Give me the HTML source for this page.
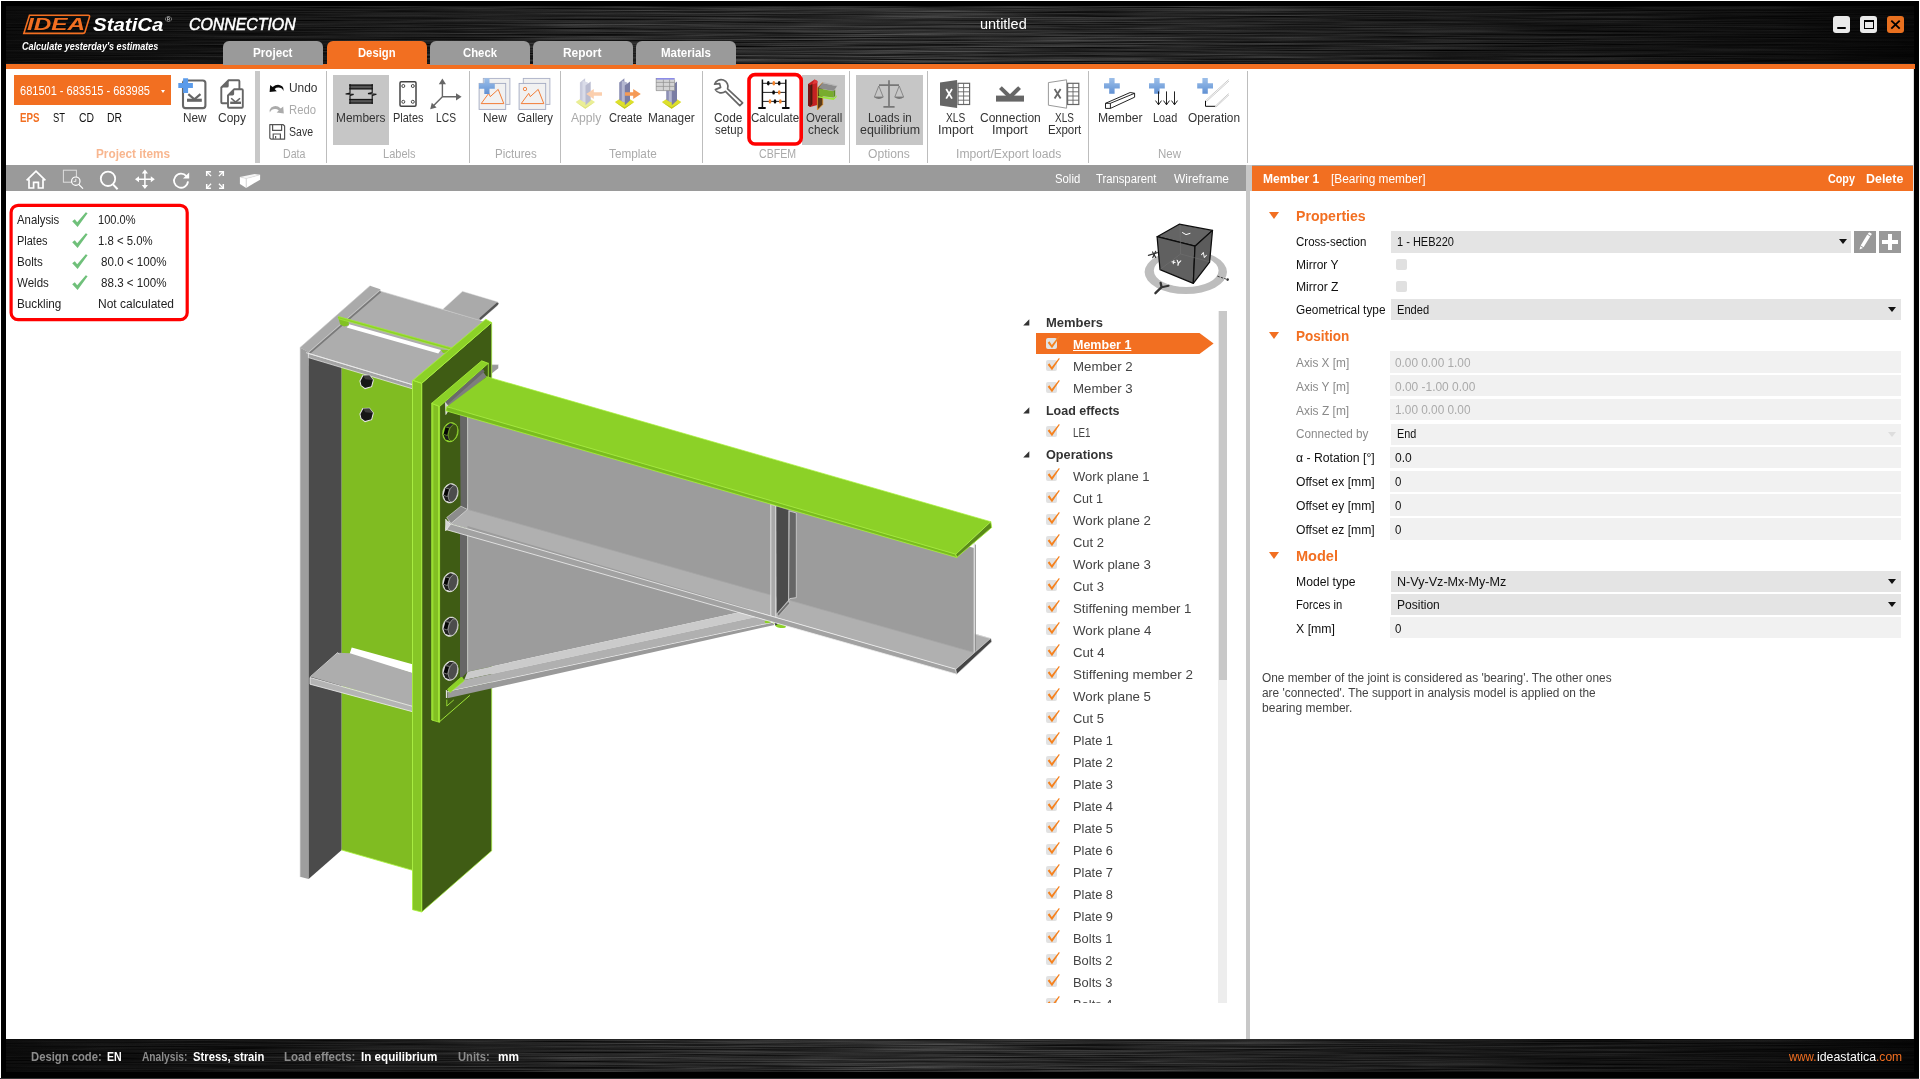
<!DOCTYPE html>
<html lang="en"><head><meta charset="utf-8"><title>IDEA StatiCa Connection - untitled</title>
<style>
*{box-sizing:border-box;margin:0;padding:0}
html,body{width:1920px;height:1079px;overflow:hidden;background:#fff;font-family:"Liberation Sans",sans-serif;}
body{position:relative}
.a{position:absolute}
.t{position:absolute;white-space:pre;line-height:1;transform-origin:0 50%;display:block}
.sep{position:absolute;top:71px;height:92px;width:1px;background:#bdbdbd}
.tab{position:absolute;top:41px;height:24px;width:100px;border-radius:6px 6px 0 0;background:#9a9a9a;color:#fff;font-weight:bold;font-size:13px;text-align:center;line-height:24px}
.hl{position:absolute;background:#c6c6c6}
.fld{position:absolute;left:1390px;width:511px;height:21.4px;background:#f1f1f1}
.cmb{position:absolute;left:1391px;width:510px;height:21px;background:#e4e4e4}
.arr{position:absolute;width:0;height:0;border-left:4px solid transparent;border-right:4px solid transparent;border-top:5px solid #111}
.tri{position:absolute;left:1269px;width:0;height:0;border-left:5px solid transparent;border-right:5px solid transparent;border-top:7px solid #F26F21}
.cb{position:absolute;width:11px;height:11px;border-radius:2px;background:#e2e2e2}
svg{position:absolute;overflow:visible}
</style></head>
<body>
<div class="a" style="left:1px;top:1px;width:1918px;height:1077px;background:#000"></div>
<div class="a" style="left:0;top:1078px;width:1919px;height:1px;background:#333"></div>
<div class="a" style="left:6px;top:64px;width:1908px;height:975px;background:#fff"></div>
<svg class="a" style="left:6px;top:6px" width="1908" height="58"><defs>
<filter id="br" x="0" y="0" width="100%" height="100%" color-interpolation-filters="sRGB"><feTurbulence type="fractalNoise" baseFrequency="0.006 0.7" numOctaves="3" seed="7"/>
<feColorMatrix type="matrix" values="1.3 0 0 0 -0.15  1.3 0 0 0 -0.15  1.3 0 0 0 -0.15  0 0 0 0 1"/></filter>
<linearGradient id="bg1" x1="0" x2="1" y1="0" y2="0"><stop offset="0" stop-color="#0b0b0b"/><stop offset="0.12" stop-color="#141414"/><stop offset="0.42" stop-color="#2b2b2b"/><stop offset="0.56" stop-color="#292929"/><stop offset="0.76" stop-color="#1a1a1a"/><stop offset="0.93" stop-color="#0e0e0e"/><stop offset="1" stop-color="#060606"/></linearGradient>
</defs><rect width="1908" height="58" fill="url(#bg1)"/><rect width="1908" height="58" fill="#808080" filter="url(#br)" style="mix-blend-mode:overlay"/><rect y="57" width="1908" height="1" fill="#10161c"/></svg>
<svg class="a" style="left:6px;top:1039px" width="1908" height="33"><rect width="1908" height="33" fill="url(#bg1)"/><rect width="1908" height="33" fill="#808080" filter="url(#br)" style="mix-blend-mode:overlay"/></svg>
<div class="a" style="left:6px;top:64px;width:1909px;height:5px;background:#F26F21"></div>
<div class="tab" style="left:223px;background:#9a9a9a"></div>
<div class="tab" style="left:327px;background:#F26F21"></div>
<div class="tab" style="left:430px;background:#9a9a9a"></div>
<div class="tab" style="left:533px;background:#9a9a9a"></div>
<div class="tab" style="left:636px;background:#9a9a9a"></div>
<div class="a" style="left:1833px;top:16px;width:17px;height:17px;border-radius:3px;background:#eaeaea"></div>
<div class="a" style="left:1837px;top:27px;width:9px;height:2px;background:#000;border-radius:1px"></div>
<div class="a" style="left:1860px;top:16px;width:17px;height:17px;border-radius:3px;background:#eaeaea"></div>
<div class="a" style="left:1864px;top:20px;width:9.5px;height:9px;border:1.6px solid #000;border-top-width:2.2px"></div>
<div class="a" style="left:1887px;top:16px;width:17px;height:17px;border-radius:3px;background:#e8701f"></div>
<svg style="left:1887px;top:16px" width="17" height="17"><path d="M4.3 4.6 L12.7 12.6 M12.7 4.6 L4.3 12.6" stroke="#000" stroke-width="1.9" fill="none"/></svg>
<svg style="left:0;top:0" width="200" height="60"><path d="M29.5 15.2 H88.2 Q90 15.2 89.5 17 L85 32 Q84.6 33.4 83 33.4 H23.8 Z" fill="none" stroke="#F26F21" stroke-width="1.6"/></svg>
<div class="a" style="left:14px;top:75px;width:157px;height:30px;background:#F26F21"></div>
<div class="a" style="left:160.5px;top:89.5px;width:0;height:0;border-left:2.5px solid transparent;border-right:2.5px solid transparent;border-top:3px solid #fff"></div>
<div class="a" style="left:255px;top:71px;width:5px;height:92px;background:#c8c8c8"></div>
<div class="sep" style="left:326px"></div>
<div class="sep" style="left:469px"></div>
<div class="sep" style="left:560px"></div>
<div class="sep" style="left:702px"></div>
<div class="sep" style="left:849px"></div>
<div class="sep" style="left:927px"></div>
<div class="sep" style="left:1088px"></div>
<div class="sep" style="left:1247px"></div>
<div class="hl" style="left:333px;top:75px;width:56px;height:70px"></div>
<div class="hl" style="left:802px;top:75px;width:43px;height:70px"></div>
<div class="hl" style="left:856px;top:75px;width:67px;height:70px"></div>
<div class="a" style="left:6px;top:165px;width:1240px;height:26px;background:#9a9a9a"></div>
<div class="a" style="left:1246px;top:165px;width:6px;height:874px;background:#c8c8c8"></div>
<div class="a" style="left:1250px;top:191px;width:2px;height:848px;background:#fff"></div>
<div class="a" style="left:1252px;top:165px;width:662px;height:1px;background:#aaa"></div>
<div class="a" style="left:1252px;top:166px;width:661px;height:25px;background:#F26F21"></div>
<div class="a" style="left:1913px;top:69px;width:1px;height:970px;background:#ddd"></div>
<svg style="left:0;top:0" width="1920" height="1079" viewBox="0 0 1920 1079">
<defs><linearGradient id="pl" x1="0" y1="0" x2="0" y2="1"><stop offset="0" stop-color="#9dbfe9"/><stop offset="0.5" stop-color="#7fa9df"/><stop offset="1" stop-color="#5f8fd2"/></linearGradient><linearGradient id="pl2" x1="0" y1="0" x2="0" y2="1"><stop offset="0" stop-color="#5b9bea"/><stop offset="1" stop-color="#5b9bea"/></linearGradient></defs>
<rect x="183" y="80.5" width="22.4" height="27.6" rx="2.6" fill="#fff" stroke="#666" stroke-width="2.1"/>
<rect x="187.00" y="98.70" width="14.80" height="3.10" fill="#666"/><path d="M188.33 94.11 L194.40 99.30 L200.47 94.11" stroke="#666" stroke-width="2.20" fill="none" stroke-linejoin="miter"/>
<rect x="178" y="78" width="15.2" height="15.2" fill="#fff" opacity="0"/>
<path d="M183.10 78.30 h5.00 v4.80 h4.80 v5.00 h-4.80 v4.80 h-5.00 v-4.80 h-4.80 v-5.00 h4.80 Z" fill="url(#pl2)"/>
<path d="M221.3 87.5 L228.6 80.3 H238.4 Q239.4 80.3 239.4 81.3 V102.2 Q239.4 103.2 238.4 103.2 H222.3 Q221.3 103.2 221.3 102.2 Z" fill="#fff" stroke="#666" stroke-width="1.9" stroke-linejoin="round"/>
<path d="M221.6 87.6 L228.7 80.5 L228.7 86 Q228.7 87.6 227 87.6 Z" fill="#666"/>
<path d="M228 95.3 L234 89.3 H241.8 Q242.8 89.3 242.8 90.3 V106.8 Q242.8 107.8 241.8 107.8 H229 Q228 107.8 228 106.8 Z" fill="#fff" stroke="#666" stroke-width="1.9" stroke-linejoin="round"/>
<path d="M228.3 95.4 L234.1 89.5 L234.1 94 Q234.1 95.4 232.6 95.4 Z" fill="#666"/>
<rect x="230.20" y="101.60" width="10.80" height="2.40" fill="#666"/><path d="M231.17 98.25 L235.60 102.20 L240.03 98.25" stroke="#666" stroke-width="1.60" fill="none" stroke-linejoin="miter"/>
<path d="M269.6 92 L270.2 85 L272.6 87 Q277.6 82.8 282.2 86.2 Q284.2 88 283.6 91 Q282 87.6 278.4 87.6 Q276.2 87.6 274.6 89 L276.8 91.2 Z" fill="#0a0a0a"/>
<path d="M283.8 113.6 L283.2 106.4 L280.8 108.4 Q275.8 104.2 271.2 107.6 Q269.2 109.4 269.8 112.4 Q271.4 109 275 109 Q277.2 109 278.8 110.4 L276.6 112.6 Z" fill="#ababab"/>
<path d="M269.8 124.7 H283.2 L284.6 126 V139.2 H271 L269.8 138 Z" fill="#fff" stroke="#555" stroke-width="1.2" stroke-linejoin="round"/>
<path d="M272.6 124.8 V130.4 H281.6 V124.8 M273.2 139 V134 H280.4 V139 M275.6 136 V138.6" fill="none" stroke="#555" stroke-width="1.2"/>
<rect x="349.6" y="84.3" width="23" height="5.2" fill="#555"/>
<rect x="349.6" y="98.8" width="23" height="5" fill="#555"/>
<path d="M349.2 85.2 H372.8 M349.2 88.8 H372.8 M349.2 99.6 H372.8 M349.2 103 H372.8" stroke="#111" stroke-width="1" fill="none"/>
<path d="M350 84 V93 L345.6 94 L353.6 94.4 L350 95.6 V104 M372.2 84 V92.6 L368 93.6 L376.4 94.2 L372.2 95.4 V104" stroke="#111" stroke-width="1.1" fill="none"/>
<rect x="400" y="81.8" width="16" height="24.4" rx="1.2" fill="#fff" stroke="#444" stroke-width="1.5"/>
<circle cx="403.3" cy="86.0" r="1.5" fill="#fff" stroke="#333" stroke-width="0.9"/>
<circle cx="412.8" cy="86.0" r="1.5" fill="#fff" stroke="#333" stroke-width="0.9"/>
<circle cx="403.3" cy="101.8" r="1.5" fill="#fff" stroke="#333" stroke-width="0.9"/>
<circle cx="412.8" cy="101.8" r="1.5" fill="#fff" stroke="#333" stroke-width="0.9"/>
<path d="M442.4 96.8 V82 M442.4 96.8 H457 M442.4 96.8 L433.2 106" stroke="#666" stroke-width="1.4" fill="none"/>
<polygon points="442.4,78.6 446,84.2 438.8,84.2" fill="#666"/>
<polygon points="461.6,96.8 456,93.2 456,100.4" fill="#666"/>
<polygon points="430.2,109.2 431.8,102.8 436.6,107.6" fill="#666"/>
<rect x="483.3" y="78.4" width="26.6" height="26" fill="#f1f1f1" stroke="#aab0c6" stroke-width="0.9"/>
<rect x="479.1" y="83.4" width="26.6" height="26" fill="#f1f1f1" stroke="#a3aac2" stroke-width="0.9"/>
<path d="M481.2 103.6 L488.7 93.4 L490.3 96.6 L498.2 89.4 L503.8 103.6 Z" fill="none" stroke="#F26F21" stroke-width="0.9" stroke-linejoin="round"/>
<rect x="523.3" y="78.4" width="26.6" height="26" fill="#f1f1f1" stroke="#aab0c6" stroke-width="0.9"/>
<rect x="519.1" y="83.4" width="26.6" height="26" fill="#f1f1f1" stroke="#a3aac2" stroke-width="0.9"/>
<path d="M521.2 103.6 L528.7 93.4 L530.3 96.6 L538.2 89.4 L543.8 103.6 Z" fill="none" stroke="#F26F21" stroke-width="0.9" stroke-linejoin="round"/>
<circle cx="525" cy="89" r="1.7" fill="none" stroke="#F26F21" stroke-width="0.8"/>
<path d="M484.30 78.20 h5.20 v5.30 h5.30 v5.20 h-5.30 v5.30 h-5.20 v-5.30 h-5.30 v-5.20 h5.30 Z" fill="url(#pl)"/>
<polygon points="575.6,102.0 585.3,95.8 595.0,102.0 585.3,108.7" fill="#eaee96"/><polygon points="575.6,102.0 585.3,108.7 595.0,102.0 585.3,107.2" fill="#e0e480"/><polygon points="579.9,82.5 585.1,78.2 585.1,102.5 579.9,99.8" fill="#c9cbdc"/><polygon points="582.5,80.4 587.9,82.6 587.9,103.2 582.5,101.2" fill="#d9dbe8"/><polygon points="585.5,85.6 590.7,81.4 590.7,100.6 585.5,105.2" fill="#b9bbd0"/>
<polygon points="602.0,92.2 593.8,92.2 593.8,89.0 586.2,94.0 593.8,99.0 593.8,95.8 602.0,95.8" fill="#fbcfae"/>
<polygon points="614.9,102.0 624.6,95.8 634.3,102.0 624.6,108.7" fill="#dde02c"/><polygon points="614.9,102.0 624.6,108.7 634.3,102.0 624.6,107.2" fill="#c2c71c"/><polygon points="619.2,82.5 624.4,78.2 624.4,102.5 619.2,99.8" fill="#8d90b4"/><polygon points="621.8,80.4 627.2,82.6 627.2,103.2 621.8,101.2" fill="#b4b7d0"/><polygon points="624.8,85.6 630.0,81.4 630.0,100.6 624.8,105.2" fill="#7a7da4"/>
<polygon points="625.0,92.2 633.2,92.2 633.2,89.0 640.8,94.0 633.2,99.0 633.2,95.8 625.0,95.8" fill="#f59a56"/>
<polygon points="661.9,102.0 671.6,95.8 681.3,102.0 671.6,108.7" fill="#dde02c"/><polygon points="661.9,102.0 671.6,108.7 681.3,102.0 671.6,107.2" fill="#c2c71c"/><polygon points="666.2,82.5 671.4,78.2 671.4,102.5 666.2,99.8" fill="#8d90b4"/><polygon points="668.8,80.4 674.2,82.6 674.2,103.2 668.8,101.2" fill="#b4b7d0"/><polygon points="671.8,85.6 677.0,81.4 677.0,100.6 671.8,105.2" fill="#7a7da4"/>
<rect x="656" y="78" width="18.6" height="12.6" fill="#d4d4d4"/>
<rect x="656" y="78" width="18.6" height="1.6" fill="#8c8ce8"/>
<path d="M656 82.4 H674.6 M656 86.4 H674.6 M656 90.6 H674.6 M656.2 78 V90.6 M663.4 79.6 V90.6 M669.6 79.6 V90.6 M674.6 79.6 V90.6" stroke="#8f8f8f" stroke-width="0.7" fill="none"/>
<path d="M714.6 84.2 L719.6 83.6 L720.6 87.4 L715.4 89.6 A6.6 6.6 0 0 0 725.4 91.4 L739.8 105.6 L742.6 102.8 L727.6 88.8 A6.6 6.6 0 0 0 714.6 84.2 Z" fill="#fff" stroke="#666" stroke-width="1.7" stroke-linejoin="round"/>
<path d="M762.4 79.4 V108.2 M785.8 79.4 V108.2" stroke="#0a0a0a" stroke-width="1.5" fill="none"/>
<path d="M759 108 H765 M782.8 108 H788.8" stroke="#0a0a0a" stroke-width="1.9" stroke-linecap="round" fill="none"/>
<path d="M762.4 83.3 H785.8 M762.4 92.4 H785.8 M762.4 101.4 H785.8" stroke="#0a0a0a" stroke-width="0.9" fill="none"/>
<ellipse cx="768.3" cy="83.3" rx="1.35" ry="2.2" fill="#0a0a0a"/>
<ellipse cx="773.8" cy="83.3" rx="1.35" ry="2.2" fill="#f5822a"/>
<ellipse cx="779.2" cy="83.3" rx="1.35" ry="2.2" fill="#0a0a0a"/>
<ellipse cx="773.6" cy="92.4" rx="1.35" ry="2.2" fill="#0a0a0a"/>
<ellipse cx="779.2" cy="92.4" rx="1.35" ry="2.2" fill="#f5822a"/>
<ellipse cx="770.0" cy="101.4" rx="1.35" ry="2.2" fill="#f5822a"/>
<ellipse cx="775.0" cy="101.4" rx="1.35" ry="2.2" fill="#0a0a0a"/>
<ellipse cx="780.3" cy="101.4" rx="1.35" ry="2.2" fill="#f5822a"/>
<polygon points="808,84 814.6,79.4 817.4,81 817.4,105 810,107 808,105.4" fill="#c32222"/>
<polygon points="808,84 810.2,85.2 810.2,106.8 808,105.4" fill="#7c1414"/>
<polygon points="810.2,85.2 812.4,84 812.4,104 810.2,106.8" fill="#4a1a10"/>
<polygon points="814.6,79.4 817.4,81 817.4,83 812.4,84.2" fill="#e23a3a"/>
<polygon points="817.4,88 822.8,82.4 822.8,104.6 817.4,110" fill="#5a3a1a" stroke="#f0961e" stroke-width="0.7"/>
<polygon points="818.4,88.2 822.2,83 837,86.2 833.6,91" fill="#8c8c8c"/>
<polygon points="822.2,83 823,82 837.6,85.4 837,86.2" fill="#b4b4b4"/>
<polygon points="818.6,88.4 833.6,91.2 833.6,97.6 819,95.8" fill="#78ac2e"/>
<polygon points="818.2,96 834,98 836.6,95.2 836.6,97 833.6,100 818.2,97.4" fill="#9be83a"/>
<polygon points="833.6,91.2 835.2,89.4 835.2,96 833.6,97.6" fill="#5d8a22"/>
<path d="M889 80.2 V106.6 M879 85.2 H899 M883.4 106.8 H894.6" stroke="#777" stroke-width="1.7" fill="none"/>
<path d="M878.8 86 L874.4 97 H883.2 Z" fill="none" stroke="#777" stroke-width="0.8" stroke-linejoin="round"/>
<path d="M874.0 97 Q878.8 100.8 883.6 97 Z" fill="#777"/>
<path d="M899.2 86 L894.8 97 H903.6 Z" fill="none" stroke="#777" stroke-width="0.8" stroke-linejoin="round"/>
<path d="M894.4 97 Q899.2 100.8 904.0 97 Z" fill="#777"/>
<rect x="958" y="83.3" width="11.6" height="21.2" fill="#fff" stroke="#666" stroke-width="1.2"/>
<path d="M958 87.6 H969.6 M958 91.8 H969.6 M958 96 H969.6 M958 100.2 H969.6 M963.6 83.3 V104.5" stroke="#666" stroke-width="0.9" fill="none"/>
<polygon points="940,82.4 957.1,79.9 957.1,108 940,105.5" fill="#666"/>
<path d="M946.2 89 L952 98.6 M952 89 L946.2 98.6" stroke="#fff" stroke-width="1.8" fill="none"/>
<rect x="996" y="95.6" width="28" height="6" fill="#666"/>
<path d="M1000.4 87.6 L1010 97 L1019.6 87.6" stroke="#666" stroke-width="4" fill="none"/>
<rect x="1067.6" y="83.3" width="11.2" height="21.2" fill="#fff" stroke="#666" stroke-width="1.2"/>
<path d="M1067.6 87.6 H1078.8 M1067.6 91.8 H1078.8 M1067.6 96 H1078.8 M1067.6 100.2 H1078.8 M1073 83.3 V104.5" stroke="#666" stroke-width="0.9" fill="none"/>
<polygon points="1048.4,82.6 1066.6,79.8 1066.6,108.2 1048.4,105.2" fill="#fff" stroke="#9a9a9a" stroke-width="1"/>
<path d="M1054.6 89 L1060.6 98.6 M1060.6 89 L1054.6 98.6" stroke="#666" stroke-width="1.8" fill="none"/>
<path d="M1109.20 78.00 h5.40 v5.20 h5.20 v5.40 h-5.20 v5.20 h-5.40 v-5.20 h-5.20 v-5.40 h5.20 Z" fill="url(#pl)"/>
<path d="M1105.5 103.3 H1110.4 V108.4 H1105.5 Z M1105.5 103.3 L1130.2 92.5 L1134.6 93.3 L1110.4 103.3 M1134.6 93.3 V97.2 L1110.4 108.4" fill="#fff" stroke="#0a0a0a" stroke-width="0.9" stroke-linejoin="round"/>
<path d="M1154.20 78.00 h5.40 v5.20 h5.20 v5.40 h-5.20 v5.20 h-5.40 v-5.20 h-5.20 v-5.40 h5.20 Z" fill="url(#pl)"/>
<path d="M1158.5 91.4 V104.6 M1155.5 100.6 L1158.5 104.8 L1161.5 100.6" stroke="#0a0a0a" stroke-width="0.9" fill="none"/>
<path d="M1166.5 91.4 V104.6 M1163.5 100.6 L1166.5 104.8 L1169.5 100.6" stroke="#0a0a0a" stroke-width="0.9" fill="none"/>
<path d="M1174.5 91.4 V104.6 M1171.5 100.6 L1174.5 104.8 L1177.5 100.6" stroke="#0a0a0a" stroke-width="0.9" fill="none"/>
<path d="M1202.40 78.00 h5.40 v5.20 h5.20 v5.40 h-5.20 v5.20 h-5.40 v-5.20 h-5.20 v-5.40 h5.20 Z" fill="url(#pl)"/>
<path d="M1205.6 100.6 L1228.6 79.6 M1206.4 101.6 L1229 81 M1215 106.4 L1228.6 93.6 M1215.8 107.2 L1229 94.8" stroke="#b8b8b8" stroke-width="0.7" fill="none"/>
<path d="M1205.5 100.8 V106.3 H1215.2" stroke="#0a0a0a" stroke-width="1" fill="none"/>
<path d="M26.6 180.4 L36 171.2 L45.4 180.4 M29 179.2 V188 H33.6 V182.4 H38.4 V188 H43 V179.2" fill="none" stroke="#fff" stroke-width="1.7" stroke-linejoin="miter"/>
<rect x="63.4" y="170.2" width="13" height="12" fill="none" stroke="#dedede" stroke-width="1"/>
<circle cx="75.8" cy="181.2" r="4.2" fill="#9a9a9a" stroke="#fff" stroke-width="1.2"/>
<path d="M78.8 184.4 L83 188.6" stroke="#fff" stroke-width="1.3"/>
<path d="M75.8 178.8 V181.4 H73.6" stroke="#fff" stroke-width="0.8" fill="none"/>
<circle cx="108" cy="178.8" r="7.2" fill="none" stroke="#fff" stroke-width="1.8"/>
<path d="M113 184.4 L117.6 189.2" stroke="#fff" stroke-width="2"/>
<path d="M144.9 171.6 V186.8 M137.2 179.2 H152.6" stroke="#fff" stroke-width="1.5"/>
<path d="M144.9 169.4 L148 173.4 H141.8 Z M144.9 189 L148 185 H141.8 Z M135 179.2 L139 176.2 V182.2 Z M154.8 179.2 L150.8 176.2 V182.2 Z" fill="#fff"/>
<path d="M186.4 176.2 A7 7 0 1 0 188 181.4" fill="none" stroke="#fff" stroke-width="1.8"/>
<path d="M189.2 172.4 V178.6 H183 Z" fill="#fff"/>
<path d="M206.7 171.7 L211.1 176.1" stroke="#fff" stroke-width="1.3" fill="none"/>
<path d="M205.9 171.7 H210.9 M206.7 170.9 V175.9" stroke="#fff" stroke-width="1.5" fill="none"/>
<path d="M223.3 171.7 L218.9 176.1" stroke="#fff" stroke-width="1.3" fill="none"/>
<path d="M224.1 171.7 H219.1 M223.3 170.9 V175.9" stroke="#fff" stroke-width="1.5" fill="none"/>
<path d="M206.7 188.1 L211.1 183.7" stroke="#fff" stroke-width="1.3" fill="none"/>
<path d="M205.9 188.2 H210.9 M206.7 188.9 V183.9" stroke="#fff" stroke-width="1.5" fill="none"/>
<path d="M223.3 188.1 L218.9 183.7" stroke="#fff" stroke-width="1.3" fill="none"/>
<path d="M224.1 188.2 H219.1 M223.3 188.9 V183.9" stroke="#fff" stroke-width="1.5" fill="none"/>
<polygon points="239.9,177.1 246.2,178.6 246.2,187.9 239.9,184" fill="#fff"/>
<polygon points="239.9,177.1 254.5,173.9 260.1,174.8 246.2,178.6" fill="#f4f4f4"/>
<polygon points="246.2,178.6 260.1,174.8 260.1,179.7 246.2,187.9" fill="#fff"/>
<path d="M246.2 178.8 V187.6" stroke="#c4c4c4" stroke-width="0.6"/>
<path d="M240.4 177.2 L246.2 178.6 L259.6 175" stroke="#dadada" stroke-width="0.5" fill="none"/>
</svg>
<svg style="left:0;top:0" width="1920" height="1079"><path d="M1036 333 H1199.5 L1213.6 343.5 L1199.5 354 H1036 Z" fill="#F26F21"/></svg>
<svg style="left:1023px;top:319.0px" width="8" height="8"><path d="M6.3 0.3 V6.5 H0.2 Z" fill="#333"/></svg>
<div class="cb" style="left:1046px;top:338.0px"></div>
<svg style="left:1046px;top:335.0px" width="14" height="14"><path d="M1.7 7.7 L3.4 6.2 L5.8 10 L12.9 1 L13.8 1.7 L6 13.3 Z" fill="#f5821f"/></svg>
<div class="cb" style="left:1046px;top:360.0px"></div>
<svg style="left:1046px;top:357.0px" width="14" height="14"><path d="M1.7 7.7 L3.4 6.2 L5.8 10 L12.9 1 L13.8 1.7 L6 13.3 Z" fill="#f5821f"/></svg>
<div class="cb" style="left:1046px;top:382.0px"></div>
<svg style="left:1046px;top:379.0px" width="14" height="14"><path d="M1.7 7.7 L3.4 6.2 L5.8 10 L12.9 1 L13.8 1.7 L6 13.3 Z" fill="#f5821f"/></svg>
<svg style="left:1023px;top:407.0px" width="8" height="8"><path d="M6.3 0.3 V6.5 H0.2 Z" fill="#333"/></svg>
<div class="cb" style="left:1046px;top:426.0px"></div>
<svg style="left:1046px;top:423.0px" width="14" height="14"><path d="M1.7 7.7 L3.4 6.2 L5.8 10 L12.9 1 L13.8 1.7 L6 13.3 Z" fill="#f5821f"/></svg>
<svg style="left:1023px;top:451.0px" width="8" height="8"><path d="M6.3 0.3 V6.5 H0.2 Z" fill="#333"/></svg>
<div class="cb" style="left:1046px;top:470.0px"></div>
<svg style="left:1046px;top:467.0px" width="14" height="14"><path d="M1.7 7.7 L3.4 6.2 L5.8 10 L12.9 1 L13.8 1.7 L6 13.3 Z" fill="#f5821f"/></svg>
<div class="cb" style="left:1046px;top:492.0px"></div>
<svg style="left:1046px;top:489.0px" width="14" height="14"><path d="M1.7 7.7 L3.4 6.2 L5.8 10 L12.9 1 L13.8 1.7 L6 13.3 Z" fill="#f5821f"/></svg>
<div class="cb" style="left:1046px;top:514.0px"></div>
<svg style="left:1046px;top:511.0px" width="14" height="14"><path d="M1.7 7.7 L3.4 6.2 L5.8 10 L12.9 1 L13.8 1.7 L6 13.3 Z" fill="#f5821f"/></svg>
<div class="cb" style="left:1046px;top:536.0px"></div>
<svg style="left:1046px;top:533.0px" width="14" height="14"><path d="M1.7 7.7 L3.4 6.2 L5.8 10 L12.9 1 L13.8 1.7 L6 13.3 Z" fill="#f5821f"/></svg>
<div class="cb" style="left:1046px;top:558.0px"></div>
<svg style="left:1046px;top:555.0px" width="14" height="14"><path d="M1.7 7.7 L3.4 6.2 L5.8 10 L12.9 1 L13.8 1.7 L6 13.3 Z" fill="#f5821f"/></svg>
<div class="cb" style="left:1046px;top:580.0px"></div>
<svg style="left:1046px;top:577.0px" width="14" height="14"><path d="M1.7 7.7 L3.4 6.2 L5.8 10 L12.9 1 L13.8 1.7 L6 13.3 Z" fill="#f5821f"/></svg>
<div class="cb" style="left:1046px;top:602.0px"></div>
<svg style="left:1046px;top:599.0px" width="14" height="14"><path d="M1.7 7.7 L3.4 6.2 L5.8 10 L12.9 1 L13.8 1.7 L6 13.3 Z" fill="#f5821f"/></svg>
<div class="cb" style="left:1046px;top:624.0px"></div>
<svg style="left:1046px;top:621.0px" width="14" height="14"><path d="M1.7 7.7 L3.4 6.2 L5.8 10 L12.9 1 L13.8 1.7 L6 13.3 Z" fill="#f5821f"/></svg>
<div class="cb" style="left:1046px;top:646.0px"></div>
<svg style="left:1046px;top:643.0px" width="14" height="14"><path d="M1.7 7.7 L3.4 6.2 L5.8 10 L12.9 1 L13.8 1.7 L6 13.3 Z" fill="#f5821f"/></svg>
<div class="cb" style="left:1046px;top:668.0px"></div>
<svg style="left:1046px;top:665.0px" width="14" height="14"><path d="M1.7 7.7 L3.4 6.2 L5.8 10 L12.9 1 L13.8 1.7 L6 13.3 Z" fill="#f5821f"/></svg>
<div class="cb" style="left:1046px;top:690.0px"></div>
<svg style="left:1046px;top:687.0px" width="14" height="14"><path d="M1.7 7.7 L3.4 6.2 L5.8 10 L12.9 1 L13.8 1.7 L6 13.3 Z" fill="#f5821f"/></svg>
<div class="cb" style="left:1046px;top:712.0px"></div>
<svg style="left:1046px;top:709.0px" width="14" height="14"><path d="M1.7 7.7 L3.4 6.2 L5.8 10 L12.9 1 L13.8 1.7 L6 13.3 Z" fill="#f5821f"/></svg>
<div class="cb" style="left:1046px;top:734.0px"></div>
<svg style="left:1046px;top:731.0px" width="14" height="14"><path d="M1.7 7.7 L3.4 6.2 L5.8 10 L12.9 1 L13.8 1.7 L6 13.3 Z" fill="#f5821f"/></svg>
<div class="cb" style="left:1046px;top:756.0px"></div>
<svg style="left:1046px;top:753.0px" width="14" height="14"><path d="M1.7 7.7 L3.4 6.2 L5.8 10 L12.9 1 L13.8 1.7 L6 13.3 Z" fill="#f5821f"/></svg>
<div class="cb" style="left:1046px;top:778.0px"></div>
<svg style="left:1046px;top:775.0px" width="14" height="14"><path d="M1.7 7.7 L3.4 6.2 L5.8 10 L12.9 1 L13.8 1.7 L6 13.3 Z" fill="#f5821f"/></svg>
<div class="cb" style="left:1046px;top:800.0px"></div>
<svg style="left:1046px;top:797.0px" width="14" height="14"><path d="M1.7 7.7 L3.4 6.2 L5.8 10 L12.9 1 L13.8 1.7 L6 13.3 Z" fill="#f5821f"/></svg>
<div class="cb" style="left:1046px;top:822.0px"></div>
<svg style="left:1046px;top:819.0px" width="14" height="14"><path d="M1.7 7.7 L3.4 6.2 L5.8 10 L12.9 1 L13.8 1.7 L6 13.3 Z" fill="#f5821f"/></svg>
<div class="cb" style="left:1046px;top:844.0px"></div>
<svg style="left:1046px;top:841.0px" width="14" height="14"><path d="M1.7 7.7 L3.4 6.2 L5.8 10 L12.9 1 L13.8 1.7 L6 13.3 Z" fill="#f5821f"/></svg>
<div class="cb" style="left:1046px;top:866.0px"></div>
<svg style="left:1046px;top:863.0px" width="14" height="14"><path d="M1.7 7.7 L3.4 6.2 L5.8 10 L12.9 1 L13.8 1.7 L6 13.3 Z" fill="#f5821f"/></svg>
<div class="cb" style="left:1046px;top:888.0px"></div>
<svg style="left:1046px;top:885.0px" width="14" height="14"><path d="M1.7 7.7 L3.4 6.2 L5.8 10 L12.9 1 L13.8 1.7 L6 13.3 Z" fill="#f5821f"/></svg>
<div class="cb" style="left:1046px;top:910.0px"></div>
<svg style="left:1046px;top:907.0px" width="14" height="14"><path d="M1.7 7.7 L3.4 6.2 L5.8 10 L12.9 1 L13.8 1.7 L6 13.3 Z" fill="#f5821f"/></svg>
<div class="cb" style="left:1046px;top:932.0px"></div>
<svg style="left:1046px;top:929.0px" width="14" height="14"><path d="M1.7 7.7 L3.4 6.2 L5.8 10 L12.9 1 L13.8 1.7 L6 13.3 Z" fill="#f5821f"/></svg>
<div class="cb" style="left:1046px;top:954.0px"></div>
<svg style="left:1046px;top:951.0px" width="14" height="14"><path d="M1.7 7.7 L3.4 6.2 L5.8 10 L12.9 1 L13.8 1.7 L6 13.3 Z" fill="#f5821f"/></svg>
<div class="cb" style="left:1046px;top:976.0px"></div>
<svg style="left:1046px;top:973.0px" width="14" height="14"><path d="M1.7 7.7 L3.4 6.2 L5.8 10 L12.9 1 L13.8 1.7 L6 13.3 Z" fill="#f5821f"/></svg>
<div class="cb" style="left:1046px;top:998.0px"></div>
<svg style="left:1046px;top:995.0px" width="14" height="14"><path d="M1.7 7.7 L3.4 6.2 L5.8 10 L12.9 1 L13.8 1.7 L6 13.3 Z" fill="#f5821f"/></svg>
<div class="a" style="left:1218px;top:311px;width:9px;height:692px;background:#ededed"></div>
<div class="a" style="left:1219px;top:311px;width:8px;height:369px;background:#c8c8c8"></div>
<div class="tri" style="top:212px"></div>
<div class="tri" style="top:332px"></div>
<div class="tri" style="top:552px"></div>
<div class="cmb" style="top:231px;width:460px;height:22px"></div>
<div class="arr" style="left:1838.5px;top:239px"></div>
<div class="a" style="left:1854px;top:231px;width:22px;height:22px;background:#999"></div>
<div class="a" style="left:1879px;top:231px;width:22px;height:22px;background:#999"></div>
<svg style="left:1854px;top:231px" width="22" height="22"><path d="M13.3 3.6 L16.2 5.4 L9.6 16.2 L6.7 14.4 Z M6.3 15.2 L9 16.9 L5.6 18.6 Z M13.8 2.9 L14.6 1.7 Q15 1.2 15.6 1.5 L17.4 2.6 Q17.9 3 17.6 3.6 L16.8 4.7 Z" fill="#fff"/></svg>
<div class="a" style="left:1882px;top:240.3px;width:16px;height:3.4px;background:#fff"></div>
<div class="a" style="left:1888.3px;top:234px;width:3.4px;height:16px;background:#fff"></div>
<div class="cb" style="left:1396px;top:259px;background:#e0e0e0"></div>
<div class="cb" style="left:1396px;top:281px;background:#e0e0e0"></div>
<div class="cmb" style="top:299px"></div>
<div class="arr" style="left:1888.2px;top:306.5px"></div>
<div class="fld" style="top:351.2px"></div>
<div class="fld" style="top:375.1px"></div>
<div class="fld" style="top:398.9px"></div>
<div class="cmb" style="top:422.8px;height:20.6px;background:#f1f1f1;top:424.2px"></div>
<div class="arr" style="left:1888.2px;top:431.8px;border-top-color:#ddd"></div>
<div class="fld" style="top:446.7px"></div>
<div class="fld" style="top:470.6px"></div>
<div class="fld" style="top:494.4px"></div>
<div class="fld" style="top:518.3px"></div>
<div class="cmb" style="top:571.2px;height:20.6px"></div>
<div class="arr" style="left:1888.2px;top:578.5px"></div>
<div class="cmb" style="top:594.2px;height:20.6px"></div>
<div class="arr" style="left:1888.2px;top:601.5px"></div>
<div class="fld" style="top:617px"></div>
<svg style="left:0;top:0" width="1920" height="1079" viewBox="0 0 1920 1079">
<polygon points="442.5,309.5 462.5,291.3 497.5,301.7 497.5,305.8 479.6,321.0 470.0,318.0" fill="#aaaaaa" stroke="#e9e9e9" stroke-width="0.5" stroke-linejoin="round"/>
<polyline points="497.5,303.6 480.5,318.6" fill="none" stroke="#555" stroke-width="2.2" stroke-linecap="round"/>
<polygon points="491.7,364.6 498.3,364.6 498.3,368.3 491.7,373.6" fill="#999"/>
<polyline points="491.7,364.6 498.3,364.6" fill="none" stroke="#e9e9e9" stroke-width="0.7" stroke-linecap="round"/>
<polygon points="300.0,347.5 308.6,352.0 308.6,878.9 300.0,876.7" fill="#9e9e9e"/>
<polyline points="300.3,347.8 300.3,876.7" fill="none" stroke="#c4c4c4" stroke-width="0.8" stroke-linecap="round"/>
<polygon points="300.0,347.5 370.0,285.8 380.4,289.2 380.4,291.4 309.2,352.8" fill="#aaaaaa"/>
<polyline points="300.2,347.4 370.0,285.9" fill="none" stroke="#cfcfcf" stroke-width="0.6" stroke-linecap="round"/>
<polygon points="309.2,352.6 380.4,291.2 485.0,322.0 413.3,380.6 412.5,385.0 308.4,353.6" fill="#adadad"/>
<polyline points="310.2,352.6 380.2,291.9" fill="none" stroke="#7a7a7a" stroke-width="1.9" stroke-linecap="round"/>
<polyline points="309.2,351.6 379.4,290.6" fill="none" stroke="#d6d6d6" stroke-width="0.6" stroke-linecap="round"/>
<polyline points="380.4,291.2 479.6,320.2" fill="none" stroke="#c6c6c6" stroke-width="0.6" stroke-linecap="round"/>
<polygon points="308.6,356.0 341.7,366.0 341.7,850.0 308.6,878.9" fill="#4b4b4b"/>
<polygon points="341.7,366.0 412.5,388.0 412.5,870.3 341.7,850.0" fill="#80bc22"/>
<polyline points="341.7,850.0 412.5,870.3" fill="none" stroke="#a9f23c" stroke-width="0.8" stroke-linecap="round"/>
<polygon points="308.4,353.4 412.5,384.7 412.5,388.8 308.4,357.6" fill="#a4a4a4" stroke="#f0f0f0" stroke-width="0.7" stroke-linejoin="round"/>
<polyline points="306.5,352.8 415.5,385.6" fill="none" stroke="#ededed" stroke-width="0.8" stroke-linecap="round"/>
<polygon points="349.2,324.2 440.8,350.0 438.3,353.4 346.7,327.6" fill="#ffffff"/>
<polygon points="338.3,317.6 348.3,320.0 349.0,325.2 344.0,326.6 340.2,324.6" fill="#82c223"/>
<polyline points="339.0,317.6 452.5,349.2" fill="none" stroke="#8cd127" stroke-width="2.3" stroke-linecap="round"/>
<polyline points="338.6,316.6 453.4,348.4" fill="none" stroke="#a9f23c" stroke-width="0.6" stroke-linecap="round"/>
<polyline points="338.4,318.8 452.0,350.4" fill="none" stroke="#a9f23c" stroke-width="0.6" stroke-linecap="round"/>
<polygon points="440.6,349.6 452.8,350.6 449.5,352.4 443.0,353.0" fill="#86c825"/>
<polygon points="351.7,647.5 412.5,664.2 412.5,673.2 349.2,654.9" fill="#ffffff"/>
<polygon points="310.6,676.7 337.5,652.8 350.0,653.3 412.5,673.0 412.5,706.5" fill="#adadad"/>
<polyline points="310.6,676.5 337.6,652.6 339.0,654.0" fill="none" stroke="#d0d0d0" stroke-width="0.9" stroke-linecap="round"/>
<polygon points="310.0,677.5 412.5,706.3 412.5,711.7 310.0,684.2" fill="#b4b4b4" stroke="#f0f0f0" stroke-width="0.8" stroke-linejoin="round"/>
<polygon points="421.7,383.3 491.7,322.5 491.7,850.8 421.7,912.0" fill="#3f5c14" stroke="#a9f23c" stroke-width="0.7" stroke-linejoin="round"/>
<polygon points="412.5,380.3 421.7,383.3 421.7,912.0 412.5,909.7" fill="#86c626" stroke="#a9f23c" stroke-width="0.8" stroke-linejoin="round"/>
<polygon points="413.0,380.3 485.8,319.2 491.7,322.5 421.7,383.3" fill="#8cd127" stroke="#a9f23c" stroke-width="0.8" stroke-linejoin="round"/>
<polyline points="488.3,363.3 488.3,377.0" fill="none" stroke="#a9f23c" stroke-width="0.8" stroke-linecap="round"/>
<polyline points="439.2,722.0 469.6,695.6" fill="none" stroke="#a9f23c" stroke-width="0.9" stroke-linecap="round"/>
<polygon points="445.0,402.5 481.7,370.0 486.7,376.7 447.0,409.0" fill="#7e7e7e"/>
<polygon points="445.0,402.5 483.0,369.0 484.6,371.6 447.0,405.0" fill="#6a6a6a"/>
<polygon points="445.4,402.5 449.8,408.2 445.8,414.6" fill="#d2d2d2" stroke="#fff" stroke-width="0.5" stroke-linejoin="round"/>
<polygon points="431.7,403.3 439.6,406.5 439.6,722.3 431.7,720.0" fill="#82bf23" stroke="#a9f23c" stroke-width="0.8" stroke-linejoin="round"/>
<polyline points="432.8,404.5 432.8,720.0" fill="none" stroke="#a9f23c" stroke-width="0.8" stroke-linecap="round"/>
<polyline points="438.6,406.5 438.6,721.6" fill="none" stroke="#a9f23c" stroke-width="0.8" stroke-linecap="round"/>
<polygon points="431.7,403.3 481.7,360.8 488.3,363.3 439.6,406.5" fill="#8cd127" stroke="#a9f23c" stroke-width="0.8" stroke-linejoin="round"/>
<polygon points="446.7,522.5 481.7,491.6 990.8,638.3 955.8,669.2" fill="#b0b0b0"/>
<polyline points="974.4,634.0 990.6,638.5" fill="none" stroke="#e9e9e9" stroke-width="0.6" stroke-linecap="round"/>
<polygon points="467.5,526.0 467.5,671.7 738.3,612.5 750.0,609.0" fill="#9c9c9c"/>
<polygon points="467.5,671.7 738.3,612.5 755.8,617.0 464.2,680.0" fill="#cbcbcb"/>
<polygon points="464.2,680.0 755.8,617.0 772.5,622.5 447.5,691.7" fill="#b0b0b0"/>
<polyline points="447.5,691.7 772.5,622.5" fill="none" stroke="#f2f2f2" stroke-width="0.8" stroke-linecap="round"/>
<polygon points="447.5,691.9 772.5,622.7 774.5,625.0 447.5,698.3" fill="#9a9a9a"/>
<polyline points="446.5,690.5 446.5,697.5" fill="none" stroke="#e4e4e4" stroke-width="1.2" stroke-linecap="round"/>
<polygon points="447.5,689.2 461.7,676.7 464.2,680.8 450.0,692.5" fill="#8cd127" stroke="#a9f23c" stroke-width="0.6" stroke-linejoin="round"/>
<polyline points="446.8,700.0 446.8,706.0 453.5,700.2" fill="none" stroke="#a9f23c" stroke-width="0.8" stroke-linecap="round"/>
<ellipse cx="768" cy="621.4" rx="3.4" ry="1.7" fill="#8cd127" transform="rotate(-12 768 621.4)"/>
<ellipse cx="780.6" cy="626" rx="5.4" ry="1.9" fill="#8cd127" transform="rotate(8 780.6 626)"/>
<polygon points="774.2,622.4 777.0,621.6 777.6,624.2 775.6,625.4" fill="#333"/>
<polyline points="773.2,619.0 773.6,623.4" fill="none" stroke="#a9f23c" stroke-width="0.8" stroke-linecap="round"/>
<polygon points="467.5,409.0 974.2,548.0 974.2,652.5 467.5,509.4" fill="#9c9c9c"/>
<polyline points="467.6,509.4 974.2,652.5" fill="none" stroke="#a6a6a6" stroke-width="0.8" stroke-linecap="round"/>
<polyline points="974.2,541.0 974.2,656.6" fill="none" stroke="#e2e2e2" stroke-width="1.1" stroke-linecap="round"/>
<polyline points="975.4,545.0 975.4,655.8" fill="none" stroke="#8a8a8a" stroke-width="0.9" stroke-linecap="round"/>
<polygon points="770.8,504.2 775.8,505.8 775.8,617.5 770.8,616.0" fill="#a9a9a9" stroke="#efefef" stroke-width="0.8" stroke-linejoin="round"/>
<polygon points="776.4,506.5 788.3,510.0 788.3,600.0 776.7,613.6" fill="#4b4b4b"/>
<polygon points="777.0,614.0 788.6,601.0 789.6,603.6 778.4,616.2" fill="#707070" stroke="#ddd" stroke-width="0.5" stroke-linejoin="round"/>
<polygon points="789.2,511.0 796.3,513.0 796.3,597.6 789.8,598.6 788.6,600.6" fill="#666666" stroke="#e0e0e0" stroke-width="0.7" stroke-linejoin="round"/>
<polygon points="460.0,412.0 467.5,414.0 467.5,509.4 460.6,506.4" fill="#666666"/>
<polyline points="467.6,416.0 467.6,509.0" fill="none" stroke="#dcdcdc" stroke-width="0.8" stroke-linecap="round"/>
<polygon points="460.0,529.0 467.5,531.0 467.5,671.7 462.5,676.9 460.0,676.9" fill="#666666"/>
<polyline points="467.6,533.0 467.6,671.5" fill="none" stroke="#dcdcdc" stroke-width="0.8" stroke-linecap="round"/>
<polygon points="446.7,517.5 460.8,506.2 467.5,509.4 451.0,523.5" fill="#8c8c8c" stroke="#e6e6e6" stroke-width="0.6" stroke-linejoin="round"/>
<polygon points="446.7,522.8 955.8,669.2 956.7,674.2 445.8,529.5" fill="#a2a2a2" stroke="#f0f0f0" stroke-width="0.8" stroke-linejoin="round"/>
<polygon points="445.6,519.0 450.4,524.6 445.6,531.0" fill="#d4d4d4" stroke="#fff" stroke-width="0.5" stroke-linejoin="round"/>
<polygon points="955.8,669.2 990.8,638.3 991.7,641.7 956.7,674.2" fill="#454545" stroke="#d8d8d8" stroke-width="0.6" stroke-linejoin="round"/>
<polygon points="446.7,406.7 486.7,376.7 990.8,521.7 955.8,554.2" fill="#8cd127"/>
<polyline points="486.7,376.7 990.8,521.7" fill="none" stroke="#a9f23c" stroke-width="0.7" stroke-linecap="round"/>
<polygon points="446.7,406.7 955.8,554.2 956.7,557.5 445.8,410.8" fill="#7abd1f" stroke="#a9f23c" stroke-width="0.8" stroke-linejoin="round"/>
<polygon points="955.8,554.2 990.8,521.7 991.7,527.5 956.7,557.5" fill="#5a8a1a" stroke="#a9f23c" stroke-width="0.8" stroke-linejoin="round"/>
<g transform="translate(450.4 432.2) rotate(14)"><ellipse cx="0" cy="0" rx="7.6" ry="9.8" fill="#86c426" stroke="#a6ef3a" stroke-width="0.6"/><polygon points="-6,-3.8 -2.6,-8.4 2,-8.8 2,8.4 -3,8 -6.2,3.6" fill="#050505"/><polygon points="-2.6,-8.4 2,-8.8 1.2,-4.6 -1.8,-4 -6,-3.8" fill="#2c2c2c"/><polygon points="-6.2,3.6 -2,4 1,4.8 2,8.4 -3,8" fill="#1e1e1e"/><path d="M-6,-3.8 L-1.8,-4 L-2,4 L-6.2,3.6" fill="none" stroke="#9be035" stroke-width="0.45"/><ellipse cx="2.6" cy="-0.2" rx="4.3" ry="8.5" fill="#3b5212" stroke="#9be035" stroke-width="0.45"/></g>
<g transform="translate(450.4 493.3) rotate(14)"><ellipse cx="0" cy="0" rx="7.6" ry="9.8" fill="#d6d6d6" stroke="#f0f0f0" stroke-width="0.6"/><polygon points="-6,-3.8 -2.6,-8.4 2,-8.8 2,8.4 -3,8 -6.2,3.6" fill="#050505"/><polygon points="-2.6,-8.4 2,-8.8 1.2,-4.6 -1.8,-4 -6,-3.8" fill="#2c2c2c"/><polygon points="-6.2,3.6 -2,4 1,4.8 2,8.4 -3,8" fill="#1e1e1e"/><path d="M-6,-3.8 L-1.8,-4 L-2,4 L-6.2,3.6" fill="none" stroke="#d8d8d8" stroke-width="0.45"/><ellipse cx="2.6" cy="-0.2" rx="4.3" ry="8.5" fill="#4c4c4c" stroke="#d8d8d8" stroke-width="0.45"/></g>
<g transform="translate(450.4 582.2) rotate(14)"><ellipse cx="0" cy="0" rx="7.6" ry="9.8" fill="#d6d6d6" stroke="#f0f0f0" stroke-width="0.6"/><polygon points="-6,-3.8 -2.6,-8.4 2,-8.8 2,8.4 -3,8 -6.2,3.6" fill="#050505"/><polygon points="-2.6,-8.4 2,-8.8 1.2,-4.6 -1.8,-4 -6,-3.8" fill="#2c2c2c"/><polygon points="-6.2,3.6 -2,4 1,4.8 2,8.4 -3,8" fill="#1e1e1e"/><path d="M-6,-3.8 L-1.8,-4 L-2,4 L-6.2,3.6" fill="none" stroke="#d8d8d8" stroke-width="0.45"/><ellipse cx="2.6" cy="-0.2" rx="4.3" ry="8.5" fill="#4c4c4c" stroke="#d8d8d8" stroke-width="0.45"/></g>
<g transform="translate(450.4 626.7) rotate(14)"><ellipse cx="0" cy="0" rx="7.6" ry="9.8" fill="#d6d6d6" stroke="#f0f0f0" stroke-width="0.6"/><polygon points="-6,-3.8 -2.6,-8.4 2,-8.8 2,8.4 -3,8 -6.2,3.6" fill="#050505"/><polygon points="-2.6,-8.4 2,-8.8 1.2,-4.6 -1.8,-4 -6,-3.8" fill="#2c2c2c"/><polygon points="-6.2,3.6 -2,4 1,4.8 2,8.4 -3,8" fill="#1e1e1e"/><path d="M-6,-3.8 L-1.8,-4 L-2,4 L-6.2,3.6" fill="none" stroke="#d8d8d8" stroke-width="0.45"/><ellipse cx="2.6" cy="-0.2" rx="4.3" ry="8.5" fill="#4c4c4c" stroke="#d8d8d8" stroke-width="0.45"/></g>
<g transform="translate(450.4 670.8) rotate(14)"><ellipse cx="0" cy="0" rx="7.6" ry="9.8" fill="#d6d6d6" stroke="#f0f0f0" stroke-width="0.6"/><polygon points="-6,-3.8 -2.6,-8.4 2,-8.8 2,8.4 -3,8 -6.2,3.6" fill="#050505"/><polygon points="-2.6,-8.4 2,-8.8 1.2,-4.6 -1.8,-4 -6,-3.8" fill="#2c2c2c"/><polygon points="-6.2,3.6 -2,4 1,4.8 2,8.4 -3,8" fill="#1e1e1e"/><path d="M-6,-3.8 L-1.8,-4 L-2,4 L-6.2,3.6" fill="none" stroke="#d8d8d8" stroke-width="0.45"/><ellipse cx="2.6" cy="-0.2" rx="4.3" ry="8.5" fill="#4c4c4c" stroke="#d8d8d8" stroke-width="0.45"/></g>
<g transform="translate(366.7 381.7) rotate(-8)"><polygon points="-6.6,-1.6 -3,-6.6 3.6,-6 6.8,-0.6 4.2,5.6 -2.6,6.6 -6.2,3" fill="#161616" stroke="#e8e8e8" stroke-width="1"/><polygon points="-3,-6.6 3.6,-6 6.8,-0.6 3.6,-1.4 -1,-2.6" fill="#3c3c3c"/></g>
<g transform="translate(366.7 414.7) rotate(-8)"><polygon points="-6.6,-1.6 -3,-6.6 3.6,-6 6.8,-0.6 4.2,5.6 -2.6,6.6 -6.2,3" fill="#161616" stroke="#e8e8e8" stroke-width="1"/><polygon points="-3,-6.6 3.6,-6 6.8,-0.6 3.6,-1.4 -1,-2.6" fill="#3c3c3c"/></g>
</svg>
<svg style="left:0;top:0" width="1920" height="1079" viewBox="0 0 1920 1079">
<path fill-rule="evenodd" fill="#bdbdbd" d="M1144.6 272.1 a41.2 22 0 1 0 82.4 0 a41.2 22 0 1 0 -82.4 0 Z M1153.8 270.6 a32.4 16.4 0 1 0 64.8 0 a32.4 16.4 0 1 0 -64.8 0 Z"/>
<polygon points="1179.2,224.2 1212.5,230.4 1195.0,246.2 1157.1,236.7" fill="#646464" stroke="#0d0d0d" stroke-width="1.25" stroke-linejoin="round"/>
<polygon points="1157.1,236.7 1195.0,246.2 1193.3,283.3 1160.0,269.6" fill="#606060" stroke="#0d0d0d" stroke-width="1.25" stroke-linejoin="round"/>
<polygon points="1195.0,246.2 1212.5,230.4 1209.6,262.1 1193.3,283.3" fill="#5c5c5c" stroke="#0d0d0d" stroke-width="1.25" stroke-linejoin="round"/>
<polyline points="1180.0,225.0 1180.6,254.0 1160.6,269.0" fill="none" stroke="#707070" stroke-width="0.6" stroke-linecap="round"/>
<polyline points="1180.6,254.0 1209.0,261.6" fill="none" stroke="#707070" stroke-width="0.6" stroke-linecap="round"/>
<text x="1171.2" y="265" font-family="Liberation Sans, sans-serif" font-size="8" font-weight="bold" fill="#fff" transform="rotate(12 1175 262)">+Y</text>
<text x="1201.4" y="258" font-family="Liberation Sans, sans-serif" font-size="7" font-weight="bold" fill="#fff" transform="rotate(-48 1203 255)">Z</text>
<polyline points="1182.5,232.6 1186.0,234.6 1190.0,233.4" fill="none" stroke="#fff" stroke-width="1" stroke-linecap="round"/>
<polyline points="1155.4,293.2 1161.6,287.2 1160.6,282.8" fill="none" stroke="#333" stroke-width="2.3" stroke-linecap="round"/>
<polyline points="1161.6,287.2 1168.6,285.8" fill="none" stroke="#333" stroke-width="2" stroke-linecap="round"/>
<polyline points="1148.4,255.4 1157.4,252.6" fill="none" stroke="#333" stroke-width="1.2" stroke-linecap="round"/>
<polyline points="1152.6,252.0 1155.6,257.4" fill="none" stroke="#333" stroke-width="1.2" stroke-linecap="round"/>
<polyline points="1155.6,251.4 1152.8,257.6" fill="none" stroke="#333" stroke-width="1.2" stroke-linecap="round"/>
<path d="M1217.4 276.2 L1226 279" stroke="#333" stroke-width="0.9" stroke-dasharray="2.4 1.2" fill="none"/>
<circle cx="1227.6" cy="279.6" r="1.3" fill="#333"/>
</svg>
<svg style="left:71px;top:211.2px" width="18" height="18"><path d="M1.2 10.2 L3.8 8.2 L6.2 11.2 L14.8 1.2 L16.6 2.2 L6.6 16 Z" fill="#6fc07a"/></svg>
<svg style="left:71px;top:232.1px" width="18" height="18"><path d="M1.2 10.2 L3.8 8.2 L6.2 11.2 L14.8 1.2 L16.6 2.2 L6.6 16 Z" fill="#6fc07a"/></svg>
<svg style="left:71px;top:253.1px" width="18" height="18"><path d="M1.2 10.2 L3.8 8.2 L6.2 11.2 L14.8 1.2 L16.6 2.2 L6.6 16 Z" fill="#6fc07a"/></svg>
<svg style="left:71px;top:274.1px" width="18" height="18"><path d="M1.2 10.2 L3.8 8.2 L6.2 11.2 L14.8 1.2 L16.6 2.2 L6.6 16 Z" fill="#6fc07a"/></svg>
<span class="t" style="left:980.00px;top:17.49px;font-size:14px;color:#fff;transform:scaleX(1.0342);">untitled</span>
<span class="t" style="left:92.50px;top:14.96px;font-size:19px;color:#fff;transform:scaleX(1.0768);font-weight:bold;font-style:italic;">StatiCa</span>
<span class="t" style="left:165.00px;top:15.61px;font-size:8px;color:#ddd;transform:scaleX(1.1852);">®</span>
<span class="t" style="left:189.40px;top:15.73px;font-size:17px;color:#fff;transform:scaleX(0.9328);font-style:italic;-webkit-text-stroke:0.55px #fff;">CONNECTION</span>
<span class="t" style="left:21.70px;top:41.73px;font-size:10px;color:#fff;transform:scaleX(0.9039);font-weight:bold;font-style:italic;">Calculate yesterday&#x27;s estimates</span>
<span class="t" style="left:27.00px;top:16.03px;font-size:17px;color:#F26F21;transform:scaleX(1.4277);font-weight:bold;font-style:italic;">IDEA</span>
<span class="t" style="left:253.30px;top:46.08px;font-size:13px;color:#fff;transform:scaleX(0.8961);font-weight:bold;">Project</span>
<span class="t" style="left:358.30px;top:46.08px;font-size:13px;color:#fff;transform:scaleX(0.8652);font-weight:bold;">Design</span>
<span class="t" style="left:463.00px;top:46.08px;font-size:13px;color:#fff;transform:scaleX(0.8711);font-weight:bold;">Check</span>
<span class="t" style="left:563.30px;top:46.08px;font-size:13px;color:#fff;transform:scaleX(0.9167);font-weight:bold;">Report</span>
<span class="t" style="left:660.70px;top:46.08px;font-size:13px;color:#fff;transform:scaleX(0.8869);font-weight:bold;">Materials</span>
<span class="t" style="left:20.00px;top:84.76px;font-size:12px;color:#fff;transform:scaleX(0.9189);">681501 - 683515 - 683985</span>
<span class="t" style="left:20.00px;top:111.96px;font-size:12px;color:#F26F21;transform:scaleX(0.8120);font-weight:bold;">EPS</span>
<span class="t" style="left:53.00px;top:111.96px;font-size:12px;color:#111;transform:scaleX(0.7821);">ST</span>
<span class="t" style="left:78.50px;top:111.96px;font-size:12px;color:#111;transform:scaleX(0.8649);">CD</span>
<span class="t" style="left:107.00px;top:111.96px;font-size:12px;color:#111;transform:scaleX(0.8649);">DR</span>
<span class="t" style="left:182.50px;top:111.96px;font-size:12px;color:#333;transform:scaleX(0.9785);">New</span>
<span class="t" style="left:218.00px;top:111.96px;font-size:12px;color:#333;transform:scaleX(0.9994);">Copy</span>
<span class="t" style="left:289.00px;top:81.96px;font-size:12px;color:#333;transform:scaleX(0.9935);">Undo</span>
<span class="t" style="left:289.00px;top:103.86px;font-size:12px;color:#aaa;transform:scaleX(0.9412);">Redo</span>
<span class="t" style="left:289.00px;top:125.86px;font-size:12px;color:#333;transform:scaleX(0.8772);">Save</span>
<span class="t" style="left:96.00px;top:147.96px;font-size:12px;color:#f8b68f;transform:scaleX(0.9818);font-weight:bold;">Project items</span>
<span class="t" style="left:282.50px;top:147.96px;font-size:12px;color:#aaa;transform:scaleX(0.8872);">Data</span>
<span class="t" style="left:336.30px;top:111.96px;font-size:12px;color:#333;transform:scaleX(0.9897);">Members</span>
<span class="t" style="left:393.30px;top:111.96px;font-size:12px;color:#333;transform:scaleX(0.9143);">Plates</span>
<span class="t" style="left:436.30px;top:111.96px;font-size:12px;color:#333;transform:scaleX(0.8568);">LCS</span>
<span class="t" style="left:383.30px;top:147.96px;font-size:12px;color:#aaa;transform:scaleX(0.9187);">Labels</span>
<span class="t" style="left:483.30px;top:111.96px;font-size:12px;color:#333;transform:scaleX(0.9869);">New</span>
<span class="t" style="left:517.00px;top:111.96px;font-size:12px;color:#333;transform:scaleX(0.9470);">Gallery</span>
<span class="t" style="left:495.30px;top:147.96px;font-size:12px;color:#aaa;transform:scaleX(0.9617);">Pictures</span>
<span class="t" style="left:571.30px;top:111.96px;font-size:12px;color:#aaa;transform:scaleX(1.0123);">Apply</span>
<span class="t" style="left:608.50px;top:111.96px;font-size:12px;color:#333;transform:scaleX(0.9214);">Create</span>
<span class="t" style="left:648.30px;top:111.96px;font-size:12px;color:#333;transform:scaleX(0.9858);">Manager</span>
<span class="t" style="left:609.30px;top:147.96px;font-size:12px;color:#aaa;transform:scaleX(0.9794);">Template</span>
<span class="t" style="left:714.00px;top:111.96px;font-size:12px;color:#333;transform:scaleX(0.9935);">Code</span>
<span class="t" style="left:714.50px;top:124.16px;font-size:12px;color:#333;transform:scaleX(0.9537);">setup</span>
<span class="t" style="left:750.80px;top:111.96px;font-size:12px;color:#333;transform:scaleX(0.9634);">Calculate</span>
<span class="t" style="left:805.50px;top:111.96px;font-size:12px;color:#333;transform:scaleX(0.9522);">Overall</span>
<span class="t" style="left:808.00px;top:124.16px;font-size:12px;color:#333;transform:scaleX(0.9822);">check</span>
<span class="t" style="left:758.70px;top:147.96px;font-size:12px;color:#aaa;transform:scaleX(0.8833);">CBFEM</span>
<span class="t" style="left:868.00px;top:111.96px;font-size:12px;color:#333;transform:scaleX(0.9631);">Loads in</span>
<span class="t" style="left:859.50px;top:124.16px;font-size:12px;color:#333;transform:scaleX(1.0339);">equilibrium</span>
<span class="t" style="left:868.30px;top:147.96px;font-size:12px;color:#aaa;transform:scaleX(1.0082);">Options</span>
<span class="t" style="left:945.80px;top:111.96px;font-size:12px;color:#333;transform:scaleX(0.8463);">XLS</span>
<span class="t" style="left:937.50px;top:124.16px;font-size:12px;color:#333;transform:scaleX(1.0436);">Import</span>
<span class="t" style="left:979.50px;top:111.96px;font-size:12px;color:#333;transform:scaleX(1.0013);">Connection</span>
<span class="t" style="left:992.00px;top:124.16px;font-size:12px;color:#333;transform:scaleX(1.0525);">Import</span>
<span class="t" style="left:1055.00px;top:111.96px;font-size:12px;color:#333;transform:scaleX(0.8287);">XLS</span>
<span class="t" style="left:1047.50px;top:124.16px;font-size:12px;color:#333;transform:scaleX(0.9600);">Export</span>
<span class="t" style="left:956.30px;top:147.96px;font-size:12px;color:#aaa;transform:scaleX(1.0130);">Import/Export loads</span>
<span class="t" style="left:1098.30px;top:111.96px;font-size:12px;color:#333;transform:scaleX(1.0110);">Member</span>
<span class="t" style="left:1152.80px;top:111.96px;font-size:12px;color:#333;transform:scaleX(0.9063);">Load</span>
<span class="t" style="left:1187.50px;top:111.96px;font-size:12px;color:#333;transform:scaleX(0.9867);">Operation</span>
<span class="t" style="left:1157.80px;top:147.96px;font-size:12px;color:#aaa;transform:scaleX(0.9577);">New</span>
<span class="t" style="left:1055.30px;top:172.96px;font-size:12px;color:#fff;transform:scaleX(0.9443);">Solid</span>
<span class="t" style="left:1095.50px;top:172.96px;font-size:12px;color:#fff;transform:scaleX(0.9383);">Transparent</span>
<span class="t" style="left:1174.00px;top:172.96px;font-size:12px;color:#fff;transform:scaleX(0.9938);">Wireframe</span>
<span class="t" style="left:17.00px;top:214.16px;font-size:12px;color:#222;transform:scaleX(0.9466);">Analysis</span>
<span class="t" style="left:98.30px;top:214.16px;font-size:12px;color:#222;transform:scaleX(0.9213);">100.0%</span>
<span class="t" style="left:17.00px;top:235.11px;font-size:12px;color:#222;transform:scaleX(0.9143);">Plates</span>
<span class="t" style="left:98.30px;top:235.11px;font-size:12px;color:#222;transform:scaleX(0.9477);">1.8 &lt; 5.0%</span>
<span class="t" style="left:17.00px;top:256.06px;font-size:12px;color:#222;transform:scaleX(0.9667);">Bolts</span>
<span class="t" style="left:101.30px;top:256.06px;font-size:12px;color:#222;transform:scaleX(0.9670);">80.0 &lt; 100%</span>
<span class="t" style="left:17.00px;top:277.01px;font-size:12px;color:#222;transform:scaleX(0.9600);">Welds</span>
<span class="t" style="left:101.30px;top:277.01px;font-size:12px;color:#222;transform:scaleX(0.9670);">88.3 &lt; 100%</span>
<span class="t" style="left:17.00px;top:297.96px;font-size:12px;color:#222;transform:scaleX(0.9766);">Buckling</span>
<span class="t" style="left:98.30px;top:297.96px;font-size:12px;color:#222;transform:scaleX(0.9994);">Not calculated</span>
<span class="t" style="left:1046.30px;top:316.08px;font-size:13px;color:#333;transform:scaleX(0.9986);font-weight:bold;">Members</span>
<span class="t" style="left:1073.30px;top:338.28px;font-size:13px;color:#fff;transform:scaleX(0.9621);font-weight:bold;text-decoration:underline;">Member 1</span>
<span class="t" style="left:1073.30px;top:360.08px;font-size:13px;color:#444;transform:scaleX(1.0200);">Member 2</span>
<span class="t" style="left:1073.30px;top:382.08px;font-size:13px;color:#444;transform:scaleX(1.0200);">Member 3</span>
<span class="t" style="left:1046.30px;top:404.08px;font-size:13px;color:#333;transform:scaleX(0.9598);font-weight:bold;">Load effects</span>
<span class="t" style="left:1073.30px;top:426.08px;font-size:13px;color:#444;transform:scaleX(0.7562);">LE1</span>
<span class="t" style="left:1046.30px;top:448.08px;font-size:13px;color:#333;transform:scaleX(0.9763);font-weight:bold;">Operations</span>
<span class="t" style="left:1073.30px;top:470.08px;font-size:13px;color:#444;transform:scaleX(1.0018);">Work plane 1</span>
<span class="t" style="left:1073.30px;top:492.08px;font-size:13px;color:#444;transform:scaleX(0.9653);">Cut 1</span>
<span class="t" style="left:1073.30px;top:514.08px;font-size:13px;color:#444;transform:scaleX(1.0215);">Work plane 2</span>
<span class="t" style="left:1073.30px;top:536.08px;font-size:13px;color:#444;transform:scaleX(0.9975);">Cut 2</span>
<span class="t" style="left:1073.30px;top:558.08px;font-size:13px;color:#444;transform:scaleX(1.0215);">Work plane 3</span>
<span class="t" style="left:1073.30px;top:580.08px;font-size:13px;color:#444;transform:scaleX(0.9975);">Cut 3</span>
<span class="t" style="left:1073.30px;top:602.08px;font-size:13px;color:#444;transform:scaleX(1.0206);">Stiffening member 1</span>
<span class="t" style="left:1073.30px;top:624.08px;font-size:13px;color:#444;transform:scaleX(1.0280);">Work plane 4</span>
<span class="t" style="left:1073.30px;top:646.08px;font-size:13px;color:#444;transform:scaleX(1.0136);">Cut 4</span>
<span class="t" style="left:1073.30px;top:668.08px;font-size:13px;color:#444;transform:scaleX(1.0335);">Stiffening member 2</span>
<span class="t" style="left:1073.30px;top:690.08px;font-size:13px;color:#444;transform:scaleX(1.0215);">Work plane 5</span>
<span class="t" style="left:1073.30px;top:712.08px;font-size:13px;color:#444;transform:scaleX(0.9975);">Cut 5</span>
<span class="t" style="left:1073.30px;top:734.08px;font-size:13px;color:#444;transform:scaleX(0.9880);">Plate 1</span>
<span class="t" style="left:1073.30px;top:756.08px;font-size:13px;color:#444;transform:scaleX(0.9880);">Plate 2</span>
<span class="t" style="left:1073.30px;top:778.08px;font-size:13px;color:#444;transform:scaleX(0.9880);">Plate 3</span>
<span class="t" style="left:1073.30px;top:800.08px;font-size:13px;color:#444;transform:scaleX(0.9880);">Plate 4</span>
<span class="t" style="left:1073.30px;top:822.08px;font-size:13px;color:#444;transform:scaleX(0.9880);">Plate 5</span>
<span class="t" style="left:1073.30px;top:844.08px;font-size:13px;color:#444;transform:scaleX(0.9880);">Plate 6</span>
<span class="t" style="left:1073.30px;top:866.08px;font-size:13px;color:#444;transform:scaleX(0.9880);">Plate 7</span>
<span class="t" style="left:1073.30px;top:888.08px;font-size:13px;color:#444;transform:scaleX(0.9880);">Plate 8</span>
<span class="t" style="left:1073.30px;top:910.08px;font-size:13px;color:#444;transform:scaleX(0.9880);">Plate 9</span>
<span class="t" style="left:1073.30px;top:932.08px;font-size:13px;color:#444;transform:scaleX(0.9937);">Bolts 1</span>
<span class="t" style="left:1073.30px;top:954.08px;font-size:13px;color:#444;transform:scaleX(0.9937);">Bolts 2</span>
<span class="t" style="left:1073.30px;top:976.08px;font-size:13px;color:#444;transform:scaleX(0.9937);">Bolts 3</span>
<span class="t" style="left:1073.30px;top:998.08px;font-size:13px;color:#444;transform:scaleX(0.9937);">Bolts 4</span>
<span class="t" style="left:1262.50px;top:172.86px;font-size:12px;color:#fff;transform:scaleX(1.0030);font-weight:bold;">Member 1</span>
<span class="t" style="left:1330.80px;top:172.86px;font-size:12px;color:#fff;transform:scaleX(0.9908);">[Bearing member]</span>
<span class="t" style="left:1827.80px;top:172.86px;font-size:12px;color:#fff;transform:scaleX(0.8967);font-weight:bold;">Copy</span>
<span class="t" style="left:1865.50px;top:172.86px;font-size:12px;color:#fff;transform:scaleX(1.0352);font-weight:bold;">Delete</span>
<span class="t" style="left:1296.30px;top:209.19px;font-size:14px;color:#F26F21;transform:scaleX(1.0065);font-weight:bold;">Properties</span>
<span class="t" style="left:1296.30px;top:329.39px;font-size:14px;color:#F26F21;transform:scaleX(0.9668);font-weight:bold;">Position</span>
<span class="t" style="left:1296.30px;top:549.39px;font-size:14px;color:#F26F21;transform:scaleX(1.0382);font-weight:bold;">Model</span>
<span class="t" style="left:1296.30px;top:236.46px;font-size:12px;color:#111;transform:scaleX(0.9597);">Cross-section</span>
<span class="t" style="left:1397.00px;top:235.86px;font-size:12px;color:#111;transform:scaleX(0.9170);">1 - HEB220</span>
<span class="t" style="left:1296.30px;top:258.86px;font-size:12px;color:#111;transform:scaleX(1.0011);">Mirror Y</span>
<span class="t" style="left:1296.30px;top:280.86px;font-size:12px;color:#111;transform:scaleX(1.0119);">Mirror Z</span>
<span class="t" style="left:1296.30px;top:303.86px;font-size:12px;color:#111;transform:scaleX(0.9867);">Geometrical type</span>
<span class="t" style="left:1397.00px;top:303.76px;font-size:12px;color:#111;transform:scaleX(0.9279);">Ended</span>
<span class="t" style="left:1296.30px;top:356.96px;font-size:12px;color:#8a8a8a;transform:scaleX(0.9849);">Axis X [m]</span>
<span class="t" style="left:1395.00px;top:356.66px;font-size:12px;color:#aaa;transform:scaleX(0.9839);">0.00 0.00 1.00</span>
<span class="t" style="left:1296.30px;top:380.86px;font-size:12px;color:#8a8a8a;transform:scaleX(0.9929);">Axis Y [m]</span>
<span class="t" style="left:1395.00px;top:380.56px;font-size:12px;color:#aaa;transform:scaleX(0.9946);">0.00 -1.00 0.00</span>
<span class="t" style="left:1296.30px;top:404.76px;font-size:12px;color:#8a8a8a;transform:scaleX(0.9973);">Axis Z [m]</span>
<span class="t" style="left:1395.00px;top:404.46px;font-size:12px;color:#aaa;transform:scaleX(0.9839);">1.00 0.00 0.00</span>
<span class="t" style="left:1296.30px;top:428.36px;font-size:12px;color:#8a8a8a;transform:scaleX(0.9776);">Connected by</span>
<span class="t" style="left:1397.00px;top:428.16px;font-size:12px;color:#111;transform:scaleX(0.9036);">End</span>
<span class="t" style="left:1296.30px;top:452.36px;font-size:12px;color:#111;transform:scaleX(1.0206);">α - Rotation [°]</span>
<span class="t" style="left:1395.00px;top:452.16px;font-size:12px;color:#111;transform:scaleX(1.0007);">0.0</span>
<span class="t" style="left:1296.30px;top:476.16px;font-size:12px;color:#111;transform:scaleX(1.0116);">Offset ex [mm]</span>
<span class="t" style="left:1395.30px;top:475.96px;font-size:12px;color:#111;transform:scaleX(0.9570);">0</span>
<span class="t" style="left:1296.30px;top:500.06px;font-size:12px;color:#111;transform:scaleX(1.0116);">Offset ey [mm]</span>
<span class="t" style="left:1395.30px;top:499.86px;font-size:12px;color:#111;transform:scaleX(0.9570);">0</span>
<span class="t" style="left:1296.30px;top:523.96px;font-size:12px;color:#111;transform:scaleX(1.0116);">Offset ez [mm]</span>
<span class="t" style="left:1395.30px;top:523.76px;font-size:12px;color:#111;transform:scaleX(0.9570);">0</span>
<span class="t" style="left:1296.30px;top:575.86px;font-size:12px;color:#111;transform:scaleX(1.0136);">Model type</span>
<span class="t" style="left:1397.00px;top:575.86px;font-size:12px;color:#111;transform:scaleX(1.0489);">N-Vy-Vz-Mx-My-Mz</span>
<span class="t" style="left:1296.30px;top:598.86px;font-size:12px;color:#111;transform:scaleX(0.9360);">Forces in</span>
<span class="t" style="left:1397.00px;top:598.86px;font-size:12px;color:#111;transform:scaleX(1.0023);">Position</span>
<span class="t" style="left:1296.30px;top:623.36px;font-size:12px;color:#111;transform:scaleX(1.0263);">X [mm]</span>
<span class="t" style="left:1395.30px;top:623.16px;font-size:12px;color:#111;transform:scaleX(0.9570);">0</span>
<span class="t" style="left:1262.30px;top:672.06px;font-size:12px;color:#444;transform:scaleX(0.9878);">One member of the joint is considered as &#x27;bearing&#x27;. The other ones</span>
<span class="t" style="left:1262.30px;top:687.06px;font-size:12px;color:#444;transform:scaleX(0.9895);">are &#x27;connected&#x27;. The support in analysis model is applied on the</span>
<span class="t" style="left:1262.30px;top:701.86px;font-size:12px;color:#444;transform:scaleX(1.0028);">bearing member.</span>
<span class="t" style="left:31.00px;top:1050.76px;font-size:12px;color:#8c8c8c;transform:scaleX(0.9382);font-weight:bold;">Design code:</span>
<span class="t" style="left:107.30px;top:1050.76px;font-size:12px;color:#fff;transform:scaleX(0.8817);font-weight:bold;">EN</span>
<span class="t" style="left:142.30px;top:1050.76px;font-size:12px;color:#8c8c8c;transform:scaleX(0.8508);font-weight:bold;">Analysis:</span>
<span class="t" style="left:192.70px;top:1050.76px;font-size:12px;color:#fff;transform:scaleX(0.9376);font-weight:bold;">Stress, strain</span>
<span class="t" style="left:284.30px;top:1050.76px;font-size:12px;color:#8c8c8c;transform:scaleX(0.9560);font-weight:bold;">Load effects:</span>
<span class="t" style="left:361.00px;top:1050.76px;font-size:12px;color:#fff;transform:scaleX(0.9699);font-weight:bold;">In equilibrium</span>
<span class="t" style="left:458.30px;top:1050.76px;font-size:12px;color:#8c8c8c;transform:scaleX(0.9324);font-weight:bold;">Units:</span>
<span class="t" style="left:498.30px;top:1050.76px;font-size:12px;color:#fff;transform:scaleX(0.9839);font-weight:bold;">mm</span>
<span class="t" style="left:1789.00px;top:1050.96px;font-size:12px;color:#F26F21;transform:scaleX(0.9591);">www.</span>
<span class="t" style="left:1816.50px;top:1050.96px;font-size:12px;color:#fff;transform:scaleX(1.0283);">ideastatica</span>
<span class="t" style="left:1875.50px;top:1050.96px;font-size:12px;color:#F26F21;transform:scaleX(1.0071);">.com</span>
<div class="a" style="left:1030px;top:1003px;width:200px;height:36px;background:#fff"></div>
<svg style="left:0;top:0" width="1920" height="400" viewBox="0 0 1920 400"><rect x="749" y="74.6" width="52.2" height="69.4" rx="6" fill="none" stroke="#ff0000" stroke-width="3.6"/><rect x="11.1" y="205.4" width="176.1" height="114.3" rx="7" fill="none" stroke="#ff0000" stroke-width="3.2"/></svg>
</body></html>
